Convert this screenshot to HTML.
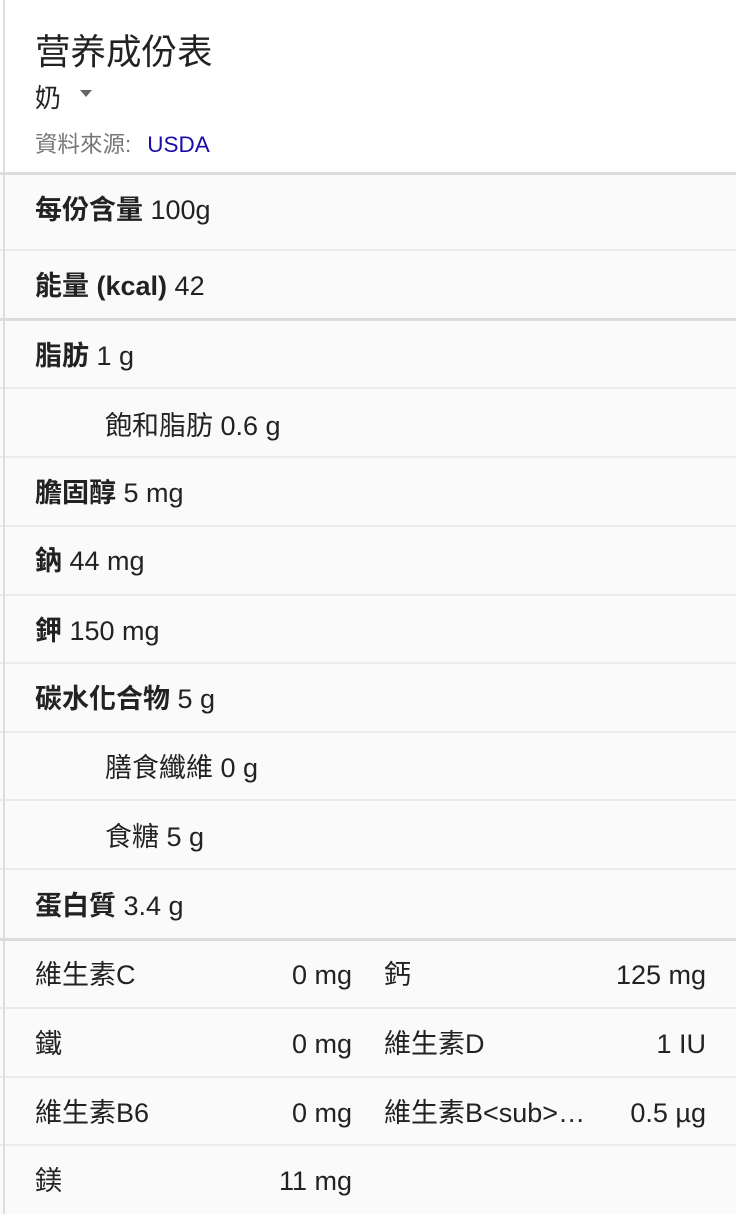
<!DOCTYPE html>
<html><head><meta charset="utf-8"><style>
*{margin:0;padding:0;box-sizing:border-box}
body{width:736px;height:1214px;background:#fafafa;font-family:"Liberation Sans","Noto Sans CJK TC",sans-serif;color:#222;overflow:hidden;position:relative}
.lb{position:absolute;left:3px;top:0;width:2px;height:1214px;background:#ddd;z-index:5}
.hd{position:absolute;left:0;top:0;width:736px;height:172px;background:#fff}
.t{position:absolute;left:35px;top:30px;font-size:35.5px;line-height:44px;color:#222}
.s{position:absolute;left:35px;top:82px;font-size:26px;line-height:32px}
.tri{position:absolute;left:80px;top:90px;width:0;height:0;border-left:6px solid transparent;border-right:6px solid transparent;border-top:7px solid #666}
.src{position:absolute;left:35px;top:131px;font-size:22.5px;line-height:28px;color:#777}
.src span{color:#1a0dab;margin-left:16px}
.hr{position:absolute;left:0;width:736px}
.thick{height:3px;background:#dcdcdc}
.thin{height:2px;background:#eaeaea}
.r{position:absolute;left:35px;font-size:27px;line-height:32px;white-space:nowrap}
.r b{font-weight:bold}
.in{left:105px}
.v{position:absolute;font-size:27px;line-height:32px;white-space:nowrap}
</style></head><body>
<div class="lb"></div>
<div class="hd"></div>
<div class="t">营养成份表</div>
<div class="s">奶</div><div class="tri"></div>
<div class="src">資料來源:<span>USDA</span></div>
<div class="hr thick" style="top:172px"></div>
<div class="r" style="top:194px"><b>每份含量</b> 100g</div>
<div class="hr thin" style="top:249px"></div>
<div class="r" style="top:270px"><b>能量 (kcal)</b> 42</div>
<div class="hr thick" style="top:318px"></div>
<div class="r" style="top:340px"><b>脂肪</b> 1 g</div>
<div class="hr thin" style="top:387px"></div>
<div class="r in" style="top:410px">飽和脂肪 0.6 g</div>
<div class="hr thin" style="top:456px"></div>
<div class="r" style="top:477px"><b>膽固醇</b> 5 mg</div>
<div class="hr thin" style="top:525px"></div>
<div class="r" style="top:545px"><b>鈉</b> 44 mg</div>
<div class="hr thin" style="top:594px"></div>
<div class="r" style="top:615px"><b>鉀</b> 150 mg</div>
<div class="hr thin" style="top:662px"></div>
<div class="r" style="top:683px"><b>碳水化合物</b> 5 g</div>
<div class="hr thin" style="top:731px"></div>
<div class="r in" style="top:752px">膳食纖維 0 g</div>
<div class="hr thin" style="top:799px"></div>
<div class="r in" style="top:821px">食糖 5 g</div>
<div class="hr thin" style="top:868px"></div>
<div class="r" style="top:890px"><b>蛋白質</b> 3.4 g</div>
<div class="hr thick" style="top:938px"></div>

<div class="r" style="top:959px">維生素C</div><div class="v" style="top:959px;right:384px">0 mg</div>
<div class="v" style="top:959px;left:384px">鈣</div><div class="v" style="top:959px;right:30px">125 mg</div>
<div class="hr thin" style="top:1007px"></div>
<div class="r" style="top:1028px">鐵</div><div class="v" style="top:1028px;right:384px">0 mg</div>
<div class="v" style="top:1028px;left:384px">維生素D</div><div class="v" style="top:1028px;right:30px">1 IU</div>
<div class="hr thin" style="top:1076px"></div>
<div class="r" style="top:1097px">維生素B6</div><div class="v" style="top:1097px;right:384px">0 mg</div>
<div class="v" style="top:1097px;left:384px">維生素B&lt;sub&gt;…</div><div class="v" style="top:1097px;right:30px">0.5 µg</div>
<div class="hr thin" style="top:1144px"></div>
<div class="r" style="top:1165px">鎂</div><div class="v" style="top:1165px;right:384px">11 mg</div>
</body></html>
